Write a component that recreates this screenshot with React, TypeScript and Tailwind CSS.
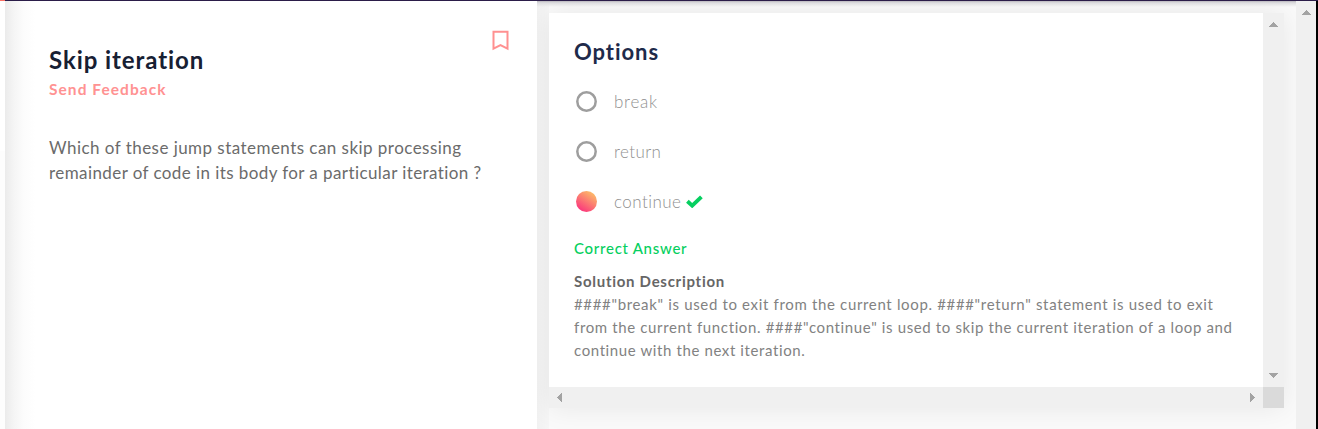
import React from "react";

function Arrow({ points, className }: { points: string; className?: string }) {
  return (
    <svg width="9" height="9" viewBox="0 0 9 9" className={className} shapeRendering="crispEdges">
      <polygon points={points} fill="#a3a3a3" />
    </svg>
  );
}

const UP = "0,7 9,7 4.5,2";
const DOWN = "0,2 9,2 4.5,7";
const LEFT = "7,0 7,9 2,4.5";
const RIGHT = "2,0 2,9 7,4.5";

function Option({ label, spacing, selected }: { label: string; spacing: string; selected?: boolean }) {
  return (
    <div className="flex h-[50px] items-center">
      <svg width="21" height="21" viewBox="0 0 21 21" className="mb-[2px] ml-[2px]">
        <defs>
          <linearGradient id="selected-fill" x1="0.2" y1="0.95" x2="0.8" y2="0.05">
            <stop offset="0.05" stopColor="#fb3a7c" />
            <stop offset="1" stopColor="#fcbe68" />
          </linearGradient>
        </defs>
        {selected ? (
          <circle cx="10.5" cy="10.5" r="10.5" fill="url(#selected-fill)" />
        ) : (
          <circle cx="10.5" cy="10.5" r="9.2" fill="none" stroke="#9e9e9e" strokeWidth="2.5" />
        )}
      </svg>
      <span className={`ml-[17px] text-[17px] leading-[24px] font-light text-[#8f8f8f] ${spacing}`}>{label}</span>
      {selected && (
        <svg width="17" height="13" viewBox="0 0 17 13" className="mb-px ml-[4.5px]">
          <path d="M1.4 6.2 L6.2 10.6 L15.4 1.8" fill="none" stroke="#06cf60" strokeWidth="3.9" />
        </svg>
      )}
    </div>
  );
}

export default function App() {
  return (
    <div className="flex h-[429px] w-[1318px] flex-col overflow-hidden bg-white font-['Lato','Open_Sans',sans-serif]">
      <header className="z-10 flex h-px shrink-0 bg-[#2b1d49]">
        <span className="w-[5px] bg-[#fa7064]" />
      </header>
      <div className="flex min-h-0 flex-1">
        <aside className="flex w-[5px] flex-col bg-white pt-[150px]">
          <div className="flex-1 bg-[#fdfdfd]" />
        </aside>
        <section className="z-10 flex w-[532px] justify-between bg-white bg-[linear-gradient(90deg,#ebebeb_0,#f5f5f5_9px,#fcfcfc_19px,#fff_30px)] pr-[28px] pl-[44px] whitespace-nowrap">
          <div className="pt-[43px]">
            <h1 className="h-[32px] text-[24px] leading-[32px] font-bold tracking-[0.92px] text-[#172033]">Skip iteration</h1>
            <a className="mt-[2px] block h-[22px] text-[15.5px] leading-[22px] font-bold tracking-[1.05px] text-[#ff9292]">Send Feedback</a>
            <p className="mt-[35px] text-[17px] leading-[25px] text-[#6b6b6b]">
              <span className="block tracking-[0.46px]">Which of these jump statements can skip processing</span>
              <span className="block tracking-[0.42px]">remainder of code in its body for a particular iteration ?</span>
            </p>
          </div>
          <svg width="17" height="21" viewBox="0 0 17 21" className="mt-[29px]">
            <path d="M1.5 1.7H15.5V18.7L8.5 15.1L1.5 18.7Z" fill="none" stroke="#ff9090" strokeWidth="2" />
          </svg>
        </section>
        <main className="relative flex w-[759px] bg-[#fafafa] pt-[12px] pl-[12px]">
          <div className="flex h-[395px] w-[735px] flex-col shadow-[0_0_26px_rgba(0,0,0,0.08)]">
            <div className="flex h-[374px]">
              <article className="w-[714px] bg-white pt-[24px] pl-[25px] whitespace-nowrap">
                <h2 className="h-[30px] text-[22px] leading-[30px] font-bold tracking-[0.95px] text-[#1e2a4a]">Options</h2>
                <div className="mt-[10px]">
                  <Option label="break" spacing="tracking-[0.75px]" />
                  <Option label="return" spacing="tracking-[0.4px]" />
                  <Option label="continue" spacing="tracking-[0.45px]" selected />
                </div>
                <p className="mt-[9px] h-[24px] text-[15px] leading-[24px] font-medium tracking-[0.72px] text-[#06cf60]">Correct Answer</p>
                <h3 className="mt-[10px] h-[23px] text-[15px] leading-[23px] font-bold tracking-[0.72px] text-[#666]">Solution Description</h3>
                <p className="text-[15px] leading-[23px] text-[#828282]">
                  <span className="block tracking-[0.66px]">####"break" is used to exit from the current loop. ####"return" statement is used to exit</span>
                  <span className="block tracking-[0.635px]">from the current function. ####"continue" is used to skip the current iteration of a loop and</span>
                  <span className="block tracking-[0.61px]">continue with the next iteration.</span>
                </p>
              </article>
              <div className="flex w-[21px] flex-col items-center justify-between bg-[#f0f0f0] pt-[7px] pb-[7px]">
                <Arrow points={UP} />
                <Arrow points={DOWN} />
              </div>
            </div>
            <div className="flex h-[21px]">
              <div className="flex w-[714px] items-center justify-between bg-[#f0f0f0] px-[6px]">
                <Arrow points={LEFT} />
                <Arrow points={RIGHT} />
              </div>
              <div className="w-[21px] bg-[#dadada]" />
            </div>
          </div>
          <div className="absolute top-0 bottom-0 left-0 w-[12px] bg-[linear-gradient(90deg,#00000009,#00000004)]" />
          <div className="absolute inset-x-0 top-0 h-[6px] bg-[linear-gradient(#b9b6bd,#dddddf_30%,#f0f0f000)]" />
        </main>
        <div className="z-10 flex w-[20px] flex-col items-center bg-[#f0f0f0] pt-[7px]">
          <Arrow points={UP} />
        </div>
        <div className="z-10 w-[2px] bg-black" />
      </div>
    </div>
  );
}
